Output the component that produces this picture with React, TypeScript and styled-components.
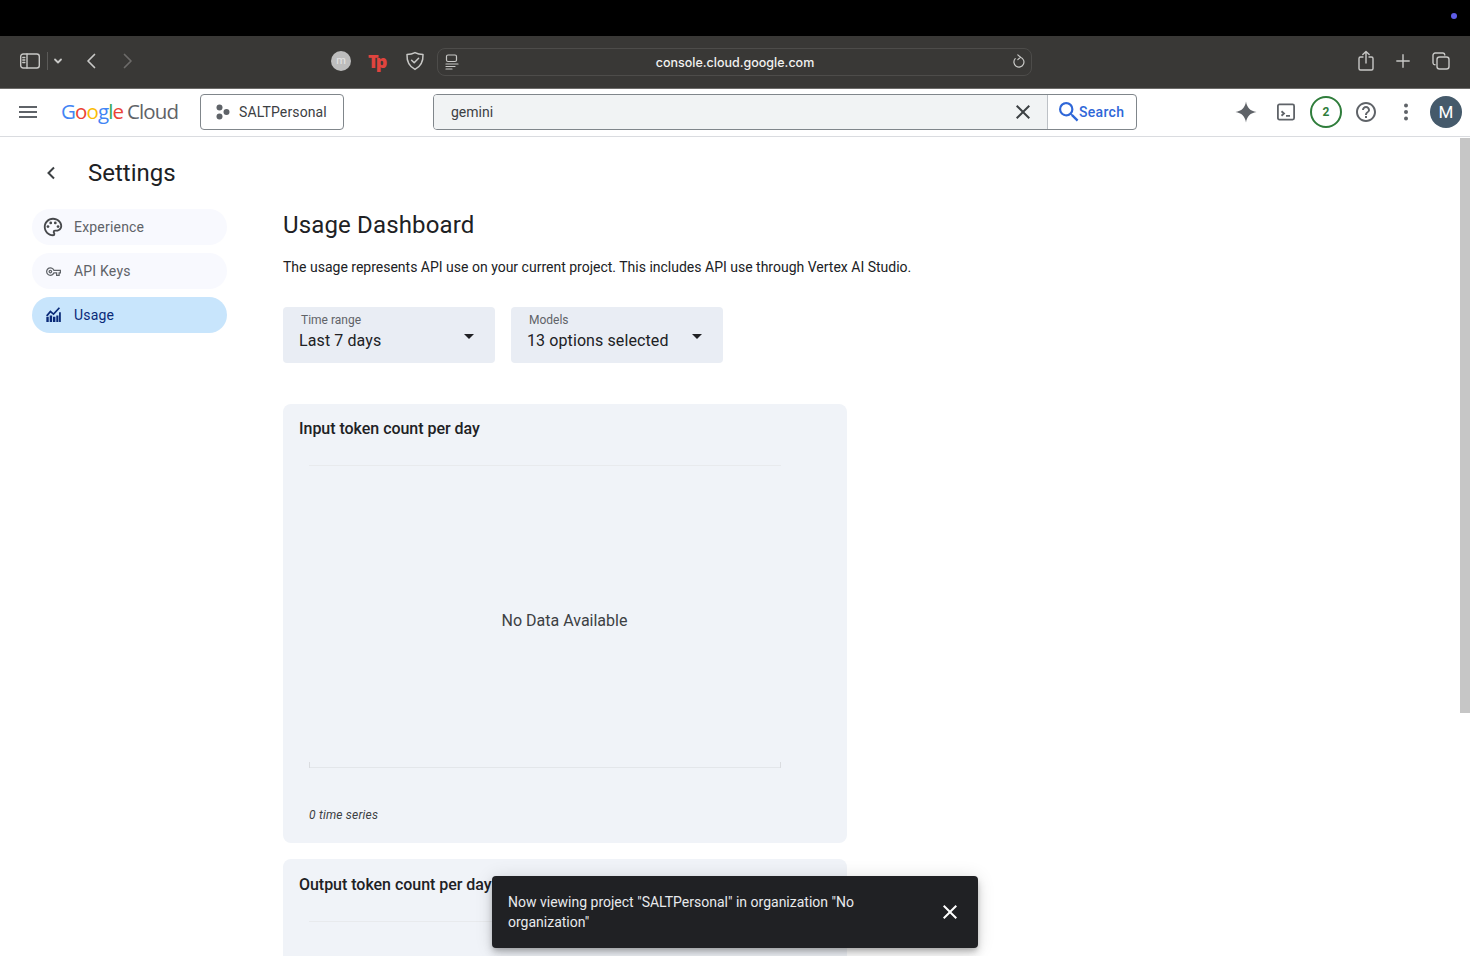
import React from "react";
import styled, { createGlobalStyle } from "styled-components";

const Global = createGlobalStyle`
  html, body { margin: 0; padding: 0; height: 100%; overflow: hidden; background: #fff; }
  body { font-family: Roboto, "Liberation Sans", sans-serif; }
  * { box-sizing: border-box; }
`;

const Page = styled.div`
  height: 956px;
  display: flex;
  flex-direction: column;
  overflow: hidden;
  position: relative;
`;

const MenuBar = styled.div`
  height: 36px;
  background: #000;
  display: flex;
  align-items: center;
  justify-content: flex-end;
  padding-right: 13px;
  flex: none;
`;
const RecordDot = styled.span`
  width: 6px;
  height: 6px;
  margin-top: -4px;
  border-radius: 50%;
  background: #5e5ce6;
`;

const BrowserBar = styled.div`
  height: 53px;
  flex: none;
  background: #393836;
  border-bottom: 1px solid #6c6b69;
  display: flex;
  align-items: center;
  padding: 0 18px 2px 20px;
  color: #c8c8c6;
`;
const BrowserIcon = styled.svg<{ $ml?: number; $dim?: boolean; $sw?: number }>`
  flex: none;
  margin-left: ${(p) => p.$ml ?? 0}px;
  color: ${(p) => (p.$dim ? "#6c6b69" : "#c8c8c6")};
  fill: none;
  stroke: currentColor;
  stroke-width: ${(p) => p.$sw ?? 1.4};
  stroke-linecap: round;
  stroke-linejoin: round;
`;
const Separator = styled.span`
  width: 1px;
  height: 18px;
  background: #5b5a58;
  margin-left: 7px;
  flex: none;
`;
const ExtAvatar = styled.span`
  width: 20px;
  height: 20px;
  margin-left: 198px;
  border-radius: 50%;
  background: #bdbdbd;
  color: #e6e6e6;
  font: 400 11px/19px Roboto, sans-serif;
  text-align: center;
  flex: none;
`;
const TpLogo = styled.span`
  width: 20px;
  margin-left: 17px;
  color: #e0443e;
  font: 800 18px/20px "Open Sans", sans-serif;
  letter-spacing: -2.8px;
  text-align: left;
  flex: none;
`;
const AddressBar = styled.div`
  width: 595px;
  height: 28px;
  margin-left: 12px;
  margin-top: 2px;
  border: 1px solid #4d4c4a;
  border-radius: 8px;
  display: flex;
  align-items: center;
  padding: 0 4px 0 7px;
  flex: none;
`;
const AddressText = styled.span`
  flex: 1;
  text-align: center;
  color: #f1f1f0;
  font: 500 12.5px Inter, sans-serif;
  padding-left: 1px;
`;

const Header = styled.header`
  height: 48px;
  flex: none;
  background: #fff;
  border-bottom: 1px solid #dadce0;
  display: flex;
  align-items: center;
  padding: 0 0 1px 16px;
`;
const Hamburger = styled.svg`
  width: 24px;
  height: 24px;
  fill: #5f6368;
  flex: none;
`;
const Logo = styled.div`
  margin-left: 21px;
  margin-top: -2px;
  width: 139px;
  font: 400 20.5px/24px "Open Sans", sans-serif;
  letter-spacing: -0.9px;
  color: #5f6368;
  white-space: nowrap;
  flex: none;
`;
const LogoLetter = styled.span<{ $c: string }>`
  color: ${(p) => p.$c};
`;
const LogoWord = styled.span`
  margin-left: 4px;
`;
const ProjectButton = styled.div`
  width: 144px;
  height: 36px;
  border: 1px solid #80868b;
  border-radius: 4px;
  display: flex;
  align-items: center;
  padding-left: 14px;
  gap: 8px;
  color: #3c4043;
  font-size: 14px;
  letter-spacing: 0.13px;
  flex: none;
`;
const SearchBox = styled.div`
  width: 704px;
  height: 36px;
  margin-left: 89px;
  border: 1px solid #80868b;
  border-radius: 4px;
  display: flex;
  overflow: hidden;
  flex: none;
`;
const SearchInput = styled.div`
  flex: 1;
  background: #f1f3f4;
  display: flex;
  align-items: center;
  justify-content: space-between;
  padding: 0 12px 0 17px;
  color: #3c4043;
  font-size: 14px;
  border-right: 1px solid #bdc1c6;
`;
const SearchButton = styled.div`
  width: 88px;
  display: flex;
  align-items: center;
  padding-left: 11px;
  font-size: 14px;
  font-weight: 500;
  letter-spacing: 0.3px;
  color: #2f67d8;
`;
const SearchGlyph = styled.svg`
  width: 20px;
  height: 20px;
  fill: #2f67d8;
  flex: none;
`;
const HeaderActions = styled.div`
  margin-left: 93px;
  display: flex;
  align-items: center;
  gap: 8px;
`;
const IconSlot = styled.div`
  width: 32px;
  height: 32px;
  display: flex;
  align-items: center;
  justify-content: center;
  color: #5f6368;
`;
const Badge = styled.div`
  width: 32px;
  height: 32px;
  border: 2px solid #2f7d3b;
  border-radius: 50%;
  color: #2f7d3b;
  font-size: 12px;
  font-weight: 700;
  display: flex;
  align-items: center;
  justify-content: center;
`;
const UserAvatar = styled.div`
  width: 32px;
  height: 32px;
  border-radius: 50%;
  background: #455a6b;
  color: #fff;
  font-size: 17px;
  display: flex;
  align-items: center;
  justify-content: center;
`;

const Body = styled.div`
  flex: 1;
  min-height: 0;
  display: flex;
  overflow: hidden;
`;
const Sidebar = styled.aside`
  width: 283px;
  flex: none;
  padding: 20px 0 0 32px;
`;
const SettingsHead = styled.div`
  height: 32px;
  display: flex;
  align-items: center;
  gap: 25px;
  padding-left: 7px;
  color: #3c4043;
`;
const SettingsTitle = styled.h2`
  margin: 0;
  font: 400 24px/32px Roboto, sans-serif;
  color: #202124;
`;
const Nav = styled.nav`
  margin-top: 20px;
  width: 195px;
  display: flex;
  flex-direction: column;
  gap: 8px;
`;
const NavItem = styled.div<{ $active?: boolean }>`
  height: 36px;
  border-radius: 18px;
  display: flex;
  align-items: center;
  padding-left: 12px;
  background: ${(p) => (p.$active ? "#c8e5fc" : "#f8f9fe")};
  color: ${(p) => (p.$active ? "#0a2a78" : "#5f6368")};
  font-size: 14px;
  letter-spacing: 0.2px;
`;
const NavIconSlot = styled.span<{ $dark?: boolean }>`
  width: 18px;
  height: 18px;
  margin-right: 12px;
  display: flex;
  align-items: center;
  justify-content: center;
  flex: none;
  color: ${(p) => (p.$dark ? "#47494c" : "inherit")};
`;
const NavIcon = styled.svg<{ $size: number }>`
  width: ${(p) => p.$size}px;
  height: ${(p) => p.$size}px;
  fill: currentColor;
  flex: none;
`;

const Main = styled.main`
  flex: 1;
  padding-top: 71px;
  min-width: 0;
`;
const Title = styled.h1`
  margin: 0;
  font: 400 24px/34px Roboto, sans-serif;
  letter-spacing: 0.15px;
  color: #202124;
`;
const Description = styled.p`
  margin: 15px 0 0;
  font-size: 14px;
  line-height: 20px;
  color: #202124;
`;
const Filters = styled.div`
  margin-top: 30px;
  display: flex;
  gap: 16px;
`;
const Select = styled.div`
  width: 212px;
  height: 56px;
  background: #e9edf4;
  border-radius: 4px;
  position: relative;
  padding: 6px 16px 0;
`;
const SelectLabel = styled.div`
  font-size: 12px;
  line-height: 14px;
  color: #5f6368;
  padding-left: 2px;
`;
const SelectValue = styled.div`
  margin-top: 3px;
  font-size: 16px;
  line-height: 22px;
  color: #202124;
  letter-spacing: 0.1px;
`;
const SelectCaret = styled.span`
  position: absolute;
  right: 21px;
  top: 27px;
  width: 0;
  height: 0;
  border-left: 5px solid transparent;
  border-right: 5px solid transparent;
  border-top: 5px solid #202124;
`;
const Card = styled.section`
  width: 564px;
  height: 439px;
  margin-top: 41px;
  background: #f0f3f8;
  border-radius: 8px;
  padding: 14px 16px 0;
  & + & {
    margin-top: 16px;
    padding-top: 15px;
  }
`;
const CardTitle = styled.h3`
  margin: 0;
  font: 500 16px/22px Roboto, sans-serif;
  color: #202124;
  letter-spacing: -0.03px;
`;
const Plot = styled.div`
  margin: 25px 0 0 10px;
  width: 472px;
  height: 303px;
  border-top: 1px solid #e8eaed;
  border-bottom: 1px solid #e3e6ea;
  position: relative;
  display: flex;
  align-items: center;
  justify-content: center;
  &::before,
  &::after {
    content: "";
    position: absolute;
    bottom: -1px;
    height: 6px;
    width: 1px;
    background: #dadce0;
  }
  &::before { left: 0; }
  &::after { right: 0; }
`;
const NoData = styled.div`
  margin-left: 39px;
  margin-top: 7px;
  font-size: 16px;
  color: #3c4043;
`;
const SeriesNote = styled.div`
  margin: 40px 0 0 10px;
  font-size: 12px;
  font-style: italic;
  color: #3c4043;
  letter-spacing: 0.2px;
`;
const PlotStub = styled.div`
  margin: 25px 0 0 10px;
  width: 472px;
  border-top: 1px solid #e8eaed;
`;

const ScrollTrack = styled.div`
  width: 10px;
  flex: none;
  background: #fff;
  padding-top: 1px;
`;
const ScrollThumb = styled.div`
  height: 575px;
  background: #c6c6c6;
`;

const Toast = styled.div`
  position: absolute;
  left: 492px;
  top: 876px;
  width: 486px;
  height: 72px;
  background: #202124;
  border-radius: 4px;
  box-shadow: 0 3px 5px -1px rgba(0,0,0,.2), 0 6px 10px 0 rgba(0,0,0,.14), 0 1px 18px 0 rgba(0,0,0,.12);
  display: flex;
  align-items: center;
  padding: 0 16px;
  gap: 40px;
`;
const ToastText = styled.div`
  flex: 1;
  color: #e8eaed;
  font-size: 14px;
  line-height: 20px;
`;
const ToastClose = styled.svg`
  width: 24px;
  height: 24px;
  fill: #fff;
  flex: none;
`;

const P = {
  palette:
    "M12 22C6.49 22 2 17.51 2 12S6.49 2 12 2s10 4.04 10 9c0 3.31-2.69 6-6 6h-1.77c-.28 0-.5.22-.5.5 0 .12.05.23.13.33.41.47.64 1.06.64 1.67A2.5 2.5 0 0 1 12 22zm0-18c-4.41 0-8 3.59-8 8s3.59 8 8 8c.28 0 .5-.22.5-.5a.54.54 0 0 0-.14-.35c-.41-.46-.63-1.05-.63-1.65a2.5 2.5 0 0 1 2.5-2.5H16c2.21 0 4-1.79 4-4 0-3.86-3.59-7-8-7z",
  key: "M22 19h-6v-4h-2.68c-1.14 2.42-3.6 4-6.32 4-3.86 0-7-3.14-7-7s3.14-7 7-7c2.72 0 5.17 1.58 6.32 4H24v6h-2v4zm-4-2h2v-4h2v-2H11.94l-.23-.67C11.01 8.34 9.11 7 7 7c-2.76 0-5 2.24-5 5s2.24 5 5 5c2.11 0 4.01-1.34 4.71-3.33l.23-.67H18v4zM7 15c-1.65 0-3-1.35-3-3s1.35-3 3-3 3 1.35 3 3-1.35 3-3 3zm0-4c-.55 0-1 .45-1 1s.45 1 1 1 1-.45 1-1-.45-1-1-1z",
  search:
    "M15.5 14h-.79l-.28-.27A6.471 6.471 0 0 0 16 9.5 6.5 6.5 0 1 0 9.5 16c1.61 0 3.09-.59 4.23-1.57l.27.28v.79l5 4.99L20.49 19l-4.99-5zm-6 0C7.01 14 5 11.99 5 9.5S7.01 5 9.5 5 14 7.01 14 9.500 11.990 14 9.500 14z",
  close:
    "M19 6.41 17.59 5 12 10.59 6.41 5 5 6.41 10.59 12 5 17.59 6.41 19 12 13.41 17.59 19 19 17.59 13.41 12z",
  help: "M11 18h2v-2h-2v2zm1-16C6.48 2 2 6.48 2 12s4.48 10 10 10 10-4.48 10-10S17.52 2 12 2zm0 18c-4.41 0-8-3.59-8-8s3.59-8 8-8 8 3.59 8 8-3.59 8-8 8zm0-14c-2.21 0-4 1.79-4 4h2c0-1.1.9-2 2-2s2 .9 2 2c0 2-3 1.75-3 5h2c0-2.25 3-2.5 3-5 0-2.21-1.79-4-4-4z",
  spark: "M12 1.5C12.9 7.6 16.4 11.1 22.5 12 16.4 12.9 12.9 16.4 12 22.5 11.1 16.4 7.6 12.9 1.5 12 7.6 11.1 11.1 7.6 12 1.5Z",
};

const GoogleWord = () => (
  <>
    <LogoLetter $c="#4285f4">G</LogoLetter>
    <LogoLetter $c="#ea4335">o</LogoLetter>
    <LogoLetter $c="#fbbc04">o</LogoLetter>
    <LogoLetter $c="#4285f4">g</LogoLetter>
    <LogoLetter $c="#34a853">l</LogoLetter>
    <LogoLetter $c="#ea4335">e</LogoLetter>
  </>
);

export default function App() {
  return (
    <Page>
      <Global />
      <MenuBar>
        <RecordDot />
      </MenuBar>
      <BrowserBar>
        <BrowserIcon width="20" height="16" viewBox="0 0 20 16">
          <rect x="0.7" y="1" width="18.6" height="14" rx="2.5" />
          <path d="M7 1v14M2.8 4.500h2M2.8 7h2M2.8 9.500h2" />
        </BrowserIcon>
        <Separator />
        <BrowserIcon width="10" height="8" viewBox="0 0 10 8" $ml={5} $sw={1.8}>
          <path d="M2 2.500 5 5.500 8 2.500" />
        </BrowserIcon>
        <BrowserIcon width="10" height="16" viewBox="0 0 10 16" $ml={23} $sw={1.7}>
          <path d="M8.500 1.500 2 8l6.500 6.500" />
        </BrowserIcon>
        <BrowserIcon width="10" height="16" viewBox="0 0 10 16" $ml={27} $dim $sw={1.7}>
          <path d="M1.500 1.500 8 8l-6.500 6.500" />
        </BrowserIcon>
        <ExtAvatar>m</ExtAvatar>
        <TpLogo>Tp</TpLogo>
        <BrowserIcon width="20" height="20" viewBox="0 0 20 20" $ml={17} $sw={1.5}>
          <path d="M10 1.600c2.400 1.300 5 1.900 8 2 .3 6.600-2.200 11.800-8 14.800C4.200 15.400 1.700 10.200 2 3.600c3-.1 5.600-.7 8-2Z" />
          <path d="M6.600 9.200 9.200 11.800 13.600 7.200" />
        </BrowserIcon>
        <AddressBar>
          <BrowserIcon width="14" height="16" viewBox="0 0 14 16" $sw={1.2}>
            <rect x="1.500" y="1" width="10" height="6.500" rx="1.500" />
            <path d="M1 10h12M1 12.500h9M1 15h6" />
          </BrowserIcon>
          <AddressText>console.cloud.google.com</AddressText>
          <BrowserIcon width="16" height="16" viewBox="0 0 16 16" $sw={1.2} $ml={1}>
            <path d="M9.500 3.300A5 5 0 1 1 4.200 4.700" />
            <path d="M6.800 .9 9.500 3.300 6.800 5.600" />
          </BrowserIcon>
        </AddressBar>
        <BrowserIcon width="18" height="22" viewBox="0 0 18 22" $ml={325}>
          <path d="M6 7H3.500A1.500 1.500 0 0 0 2 8.500v10A1.500 1.500 0 0 0 3.500 20h11a1.500 1.500 0 0 0 1.500-1.500v-10A1.500 1.500 0 0 0 14.500 7H12" />
          <path d="M9 13V1.500M5.800 4.500 9 1.500l3.200 3" />
        </BrowserIcon>
        <BrowserIcon width="14" height="14" viewBox="0 0 14 14" $ml={21}>
          <path d="M7 .8v12.400M.8 7h12.400" />
        </BrowserIcon>
        <BrowserIcon width="18" height="18" viewBox="0 0 18 18" $ml={22}>
          <rect x="5" y="5" width="12" height="12" rx="2.500" />
          <path d="M3 12.800A2 2 0 0 1 1 11V3.200A2.200 2.200 0 0 1 3.200 1H11a2 2 0 0 1 1.800 2" />
        </BrowserIcon>
      </BrowserBar>
      <Header>
        <Hamburger viewBox="0 0 24 24">
          <path d="M3 18h18v-2H3v2zm0-5h18v-2H3v2zm0-7v2h18V6H3z" />
        </Hamburger>
        <Logo>
          <GoogleWord />
          <LogoWord>Cloud</LogoWord>
        </Logo>
        <ProjectButton>
          <svg width="16" height="16" viewBox="0 0 16 16" fill="#5f6368">
            <circle cx="4.500" cy="3.500" r="3" />
            <circle cx="11.500" cy="8" r="3" />
            <circle cx="4.500" cy="12.500" r="3" />
          </svg>
          SALTPersonal
        </ProjectButton>
        <SearchBox>
          <SearchInput>
            gemini
            <svg width="24" height="24" viewBox="0 0 24 24" fill="#3c4043">
              <path d={P.close} />
            </svg>
          </SearchInput>
          <SearchButton>
            <SearchGlyph viewBox="3 3 18 18">
              <path d={P.search} />
            </SearchGlyph>
            Search
          </SearchButton>
        </SearchBox>
        <HeaderActions>
          <IconSlot>
            <svg width="24" height="24" viewBox="0 0 24 24" fill="#5f6368">
              <path d={P.spark} />
            </svg>
          </IconSlot>
          <IconSlot>
            <svg width="20" height="20" viewBox="0 0 20 20" fill="none" stroke="#5f6368" strokeWidth="1.800">
              <rect x="1.900" y="2.400" width="16.200" height="15.200" rx="1.500" />
              <path d="M5.500 9.300 8 11.500l-2.500 2.200M10 13.800h4" />
            </svg>
          </IconSlot>
          <Badge>2</Badge>
          <IconSlot>
            <svg width="24" height="24" viewBox="0 0 24 24" fill="#5f6368">
              <path d={P.help} />
            </svg>
          </IconSlot>
          <IconSlot>
            <svg width="24" height="24" viewBox="0 0 24 24" fill="#5f6368">
              <circle cx="12" cy="5.500" r="2" />
              <circle cx="12" cy="12" r="2" />
              <circle cx="12" cy="18.500" r="2" />
            </svg>
          </IconSlot>
          <UserAvatar>M</UserAvatar>
        </HeaderActions>
      </Header>
      <Body>
        <Sidebar>
          <SettingsHead>
            <svg width="24" height="24" viewBox="0 0 24 24" fill="none" stroke="#3c4043" strokeWidth="2">
              <path d="M15 6.500 9.500 12l5.500 5.500" />
            </svg>
            <SettingsTitle>Settings</SettingsTitle>
          </SettingsHead>
          <Nav>
            <NavItem>
              <NavIconSlot $dark>
                <NavIcon viewBox="0 0 24 24" $size={22}>
                  <path d={P.palette} />
                  <circle cx="6.500" cy="11.500" r="1.500" />
                  <circle cx="9.500" cy="7.500" r="1.500" />
                  <circle cx="14.500" cy="7.500" r="1.500" />
                  <circle cx="17.500" cy="11.500" r="1.500" />
                </NavIcon>
              </NavIconSlot>
              Experience
            </NavItem>
            <NavItem>
              <NavIconSlot>
                <NavIcon viewBox="0 0 24 24" $size={15}>
                  <path d={P.key} />
                </NavIcon>
              </NavIconSlot>
              API Keys
            </NavItem>
            <NavItem $active>
              <NavIconSlot>
                <NavIcon viewBox="0 0 18 18" $size={16}>
                  <path d="M1.500 11h2.700v6H1.500zM5.300 9.500H8V17H5.300zM9 11h2.700v6H9zM12.700 9.500h2.400V17h-2.400zM15.800 6h2v11h-2z" />
                  <path d="M1 9.700 6 3.700l3.500 3 6-6.500 1.400 1.300-7.200 7.900-3.500-3-3.200 3.900z" />
                </NavIcon>
              </NavIconSlot>
              Usage
            </NavItem>
          </Nav>
        </Sidebar>
        <Main>
          <Title>Usage Dashboard</Title>
          <Description>
            The usage represents API use on your current project. This includes API use through Vertex AI Studio.
          </Description>
          <Filters>
            <Select>
              <SelectLabel>Time range</SelectLabel>
              <SelectValue>Last 7 days</SelectValue>
              <SelectCaret />
            </Select>
            <Select>
              <SelectLabel>Models</SelectLabel>
              <SelectValue>13 options selected</SelectValue>
              <SelectCaret />
            </Select>
          </Filters>
          <Card>
            <CardTitle>Input token count per day</CardTitle>
            <Plot>
              <NoData>No Data Available</NoData>
            </Plot>
            <SeriesNote>0 time series</SeriesNote>
          </Card>
          <Card>
            <CardTitle>Output token count per day</CardTitle>
            <PlotStub />
          </Card>
        </Main>
        <ScrollTrack>
          <ScrollThumb />
        </ScrollTrack>
      </Body>
      <Toast>
        <ToastText>
          Now viewing project "SALTPersonal" in organization "No organization"
        </ToastText>
        <ToastClose viewBox="0 0 24 24">
          <path d={P.close} />
        </ToastClose>
      </Toast>
    </Page>
  );
}
